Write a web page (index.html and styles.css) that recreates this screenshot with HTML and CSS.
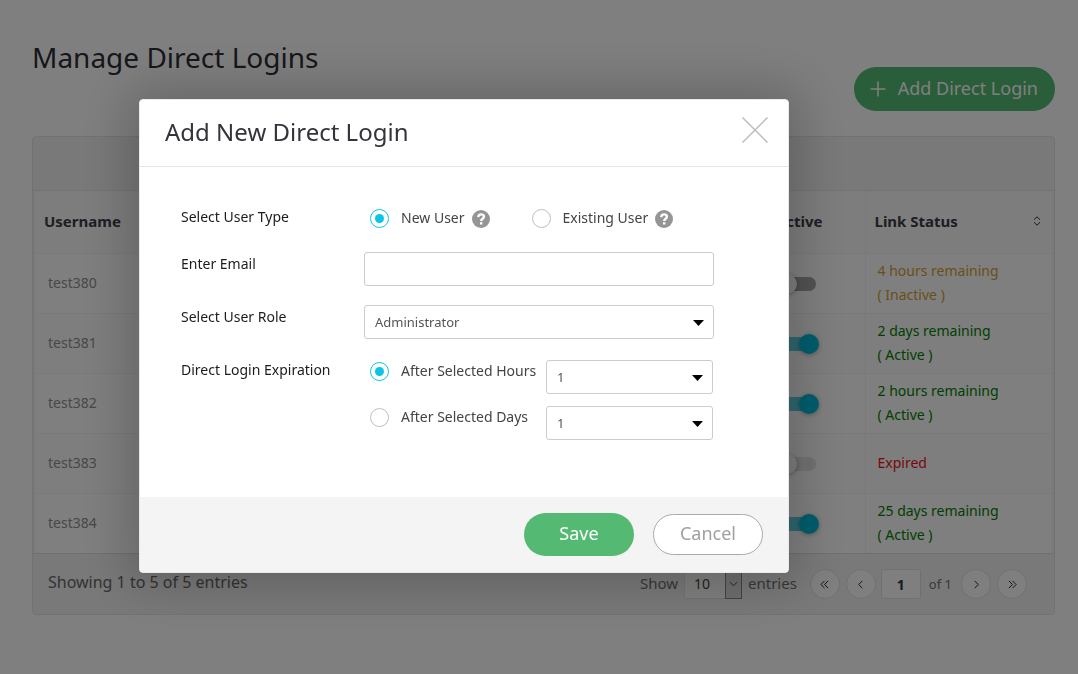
FILE: index.html
```html
<!DOCTYPE html>
<html lang="en">
<head>
<meta charset="utf-8">
<meta name="viewport" content="width=device-width, initial-scale=1">
<title>Manage Direct Logins</title>
<link rel="stylesheet" href="styles.css">
</head>
<body>
<main class="page">
  <header class="page-header">
    <h1 class="page-title">Manage Direct Logins</h1>
    <button class="add-button" type="button">
      <svg class="plus" viewBox="0 0 16 16" aria-hidden="true"><path d="M8 0.5v15M0.5 8h15"/></svg>
      Add Direct Login
    </button>
  </header>
  <section class="panel">
    <div class="panel-toolbar"></div>
    <table class="logins">
      <colgroup><col><col class="col-active"><col class="col-status"></colgroup>
      <thead>
        <tr>
          <th scope="col">Username</th>
          <th scope="col" class="head-active">Active</th>
          <th scope="col"><span class="sortable">Link Status
            <svg class="sort" viewBox="0 0 8 10" aria-hidden="true"><path d="M1 3.7L4 0.8l3 2.9M1 6.3L4 9.2l3-2.9"/></svg></span></th>
        </tr>
      </thead>
      <tbody>
        <tr><td>test380</td><td class="cell-active"><input class="switch" type="checkbox" aria-label="test380 active"></td><td class="inactive">4 hours remaining<br>( Inactive )</td></tr>
        <tr><td>test381</td><td class="cell-active"><input class="switch" type="checkbox" aria-label="test381 active" checked></td><td class="active">2 days remaining<br>( Active )</td></tr>
        <tr><td>test382</td><td class="cell-active"><input class="switch" type="checkbox" aria-label="test382 active" checked></td><td class="active">2 hours remaining<br>( Active )</td></tr>
        <tr><td>test383</td><td class="cell-active"><input class="switch" type="checkbox" aria-label="test383 active" disabled></td><td class="expired">Expired</td></tr>
        <tr><td>test384</td><td class="cell-active"><input class="switch" type="checkbox" aria-label="test384 active" checked></td><td class="active">25 days remaining<br>( Active )</td></tr>
      </tbody>
    </table>
    <footer class="panel-footer">
      <p class="summary">Showing 1 to 5 of 5 entries</p>
      <div class="pager">
        <label class="page-size"><span class="size-text">Show</span>
          <span class="size-box"><select class="size-select"><option>10</option></select><svg class="size-arrow" viewBox="0 0 17 30" aria-hidden="true"><path d="M4.500 13l4 4 4-4"/></svg></span>
          <span class="size-text">entries</span></label>
        <button class="round" type="button" aria-label="First page"><svg viewBox="0 0 10 10"><path d="M5 1L1 5l4 4M9 1L5 5l4 4"/></svg></button>
        <button class="round" type="button" aria-label="Previous page"><svg viewBox="0 0 10 10"><path d="M7 1L3 5l4 4"/></svg></button>
        <input class="page-number" type="text" value="1" aria-label="Page">
        <span class="page-total">of 1</span>
        <button class="round" type="button" aria-label="Next page"><svg viewBox="0 0 10 10"><path d="M3 1l4 4-4 4"/></svg></button>
        <button class="round" type="button" aria-label="Last page"><svg viewBox="0 0 10 10"><path d="M1 1l4 4-4 4M5 1l4 4-4 4"/></svg></button>
      </div>
    </footer>
  </section>
</main>

<div class="overlay">
  <form class="dialog" role="dialog" aria-labelledby="dialog-title">
    <header class="dialog-header">
      <h2 class="dialog-title" id="dialog-title">Add New Direct Login</h2>
      <button class="close" type="button" aria-label="Close"><svg viewBox="0 0 26 26"><path d="M0.5 0.5l25 25M25.5 0.5l-25 25"/></svg></button>
    </header>
    <div class="dialog-body">
      <span class="field-label" id="type-label">Select User Type</span>
      <div class="choices" role="radiogroup" aria-labelledby="type-label">
        <label class="choice"><input class="radio" type="radio" name="type" checked>New User
          <svg class="help" viewBox="0 0 18 18" aria-hidden="true"><circle cx="9" cy="9" r="9"/><path d="M6.200 7.100C6.300 5.200 7.400 4.400 9.100 4.400c1.700 0 2.800.9 2.800 2.300 0 2-2.700 2-2.700 4.200"/><path d="M9.200 12.200v2.300"/></svg></label>
        <label class="choice"><input class="radio" type="radio" name="type">Existing User
          <svg class="help" viewBox="0 0 18 18" aria-hidden="true"><circle cx="9" cy="9" r="9"/><path d="M6.200 7.100C6.300 5.200 7.400 4.400 9.100 4.400c1.700 0 2.800.9 2.800 2.300 0 2-2.700 2-2.700 4.200"/><path d="M9.200 12.200v2.300"/></svg></label>
      </div>
      <label class="field-label" for="email">Enter Email</label>
      <input class="control" id="email" type="email">
      <label class="field-label" for="role">Select User Role</label>
      <span class="select-box"><select class="control" id="role"><option>Administrator</option></select><svg class="caret" viewBox="0 0 11 6" aria-hidden="true"><path d="M0 0h11L5.500 6z"/></svg></span>
      <span class="field-label" id="exp-label">Direct Login Expiration</span>
      <div class="expiry" role="radiogroup" aria-labelledby="exp-label">
        <label class="choice"><input class="radio" type="radio" name="expiry" checked>After Selected Hours</label>
        <span class="select-box"><select class="control" aria-label="Hours"><option>1</option></select><svg class="caret" viewBox="0 0 11 6" aria-hidden="true"><path d="M0 0h11L5.500 6z"/></svg></span>
        <label class="choice"><input class="radio" type="radio" name="expiry">After Selected Days</label>
        <span class="select-box"><select class="control" aria-label="Days"><option>1</option></select><svg class="caret" viewBox="0 0 11 6" aria-hidden="true"><path d="M0 0h11L5.500 6z"/></svg></span>
      </div>
    </div>
    <footer class="dialog-footer">
      <button class="save" type="submit">Save</button>
      <button class="cancel" type="button">Cancel</button>
    </footer>
  </form>
</div>
</body>
</html>
```

FILE: styles.css
```css
* { box-sizing: border-box; }

body {
  margin: 0;
  background: #fff;
  font-family: "Noto Sans", sans-serif;
  font-size: 14px;
  line-height: 24px;
  color: #333;
}

button, input, select { font: inherit; margin: 0; }
svg { display: block; fill: none; stroke: currentColor; }

.page { padding: 0 23px 59px 32px; }

.page-header {
  display: flex;
  justify-content: space-between;
  align-items: flex-start;
  min-height: 136px;
}
.page-title { margin: 37px 0 0; font-size: 28px; line-height: 40px; font-weight: 400; color: #2e2f36; }

.add-button {
  display: flex;
  align-items: center;
  gap: 12px;
  height: 44px;
  margin-top: 67px;
  padding: 0 17px 2px 16px;
  border: 0;
  border-radius: 22px;
  background: #54ba73;
  color: #fff;
  font-size: 18px;
}
.plus { width: 16px; height: 16px; margin-top: 2px; stroke-width: 1.5; }

.panel { border: 1px solid #e4e4e4; border-radius: 4px; background: #f2f2f2; }
.panel-toolbar { height: 54px; border-bottom: 1px solid #e4e4e4; }

.logins {
  width: calc(100% - 4px);
  margin: 0 2px;
  border-collapse: collapse;
  table-layout: fixed;
  background: #fff;
}
.col-active { width: 200px; }
.col-status { width: 187px; }
.logins th {
  height: 62px;
  padding: 0 10px 2px 9px;
  background: #fafafa;
  text-align: left;
  font-size: 15px;
  font-weight: 700;
  color: #3c3c4a;
}
.logins .head-active { padding-right: 42px; text-align: right; }
.sortable { display: flex; align-items: center; justify-content: space-between; }
.sort { width: 8px; height: 10px; margin-right: 1px; color: #333; }
.logins td {
  height: 60px;
  padding: 0 12px 0 13px;
  border-top: 1px solid #f3f3f3;
  color: #909090;
}
.logins tr > :last-child { border-left: 1px solid #f3f3f3; }
.logins tr:nth-child(even) td { background: #fdfdfd; }
.logins .cell-active { padding: 1px 49px 0 0; }
.logins tr > td:last-child { padding-left: 12px; }
.logins .inactive { color: #cfa132; }
.logins .active { color: #008000; }
.logins .expired { color: #f00f18; }

.switch {
  appearance: none;
  display: flex;
  align-items: center;
  width: 36px;
  height: 14px;
  margin-left: auto;
  border-radius: 7px;
  background: #a6a6a6;
}
.switch::before {
  content: "";
  flex: none;
  width: 20px;
  height: 20px;
  margin-left: -3px;
  border-radius: 50%;
  background: #fafafa;
  box-shadow: 0 1px 5px rgba(0, 0, 0, .3);
}
.switch:checked { background: #60cfe2; }
.switch:checked::before { margin-left: 19px; background: #00bcdc; }
.switch:disabled { background: #e4e4e4; }

.panel-footer {
  display: flex;
  justify-content: space-between;
  align-items: center;
  min-height: 61px;
  padding: 0 27px 0 15px;
  border-top: 1px solid #e0e0e0;
}
.summary { margin: 0; padding-bottom: 4px; font-size: 16px; color: #666; }
.pager { display: flex; align-items: center; gap: 6px; }
.page-size { display: flex; align-items: center; gap: 6px; margin-right: 7px; font-size: 15px; color: #707070; }
.size-text { padding-bottom: 3px; }
.size-box { display: grid; grid-template-columns: 1fr 17px; width: 58px; }
.size-select {
  appearance: none;
  grid-area: 1 / 1 / 2 / 3;
  height: 30px;
  padding: 0 9px;
  border: 1px solid #e4e4e4;
  border-radius: 3px;
  background: #fff;
  font-size: 14px;
  color: #444;
}
.size-arrow {
  grid-area: 1 / 2;
  width: 17px;
  height: 30px;
  border: 1px solid #888;
  background: #ddd;
  color: #333;
  pointer-events: none;
}
.round {
  display: grid;
  place-items: center;
  width: 30px;
  height: 30px;
  padding: 0;
  border: 1px solid #e0e0e0;
  border-radius: 50%;
  background: #fff;
  color: #111;
}
.round svg { width: 9px; height: 9px; }
.page-number {
  width: 40px;
  height: 30px;
  margin-left: -1px;
  padding: 0;
  border: 1px solid #e0e0e0;
  border-radius: 3px;
  background: #fff;
  text-align: center;
  font-weight: 700;
  color: #34343e;
}
.page-total { margin: 0 3px 0 2px; font-size: 13px; color: #707070; }

.overlay {
  position: fixed;
  inset: 0;
  display: flex;
  justify-content: center;
  align-items: flex-start;
  overflow: auto;
  padding: 99px 150px 40px 0;
  background: rgba(0, 0, 0, .5);
}
.dialog {
  width: 100%;
  max-width: 650px;
  overflow: visible;
  border: 1px solid #e8eaec;
  border-radius: 4px;
  background: #fff;
  box-shadow: 0 0 50px 12px rgba(0, 0, 0, .2);
}
.dialog-header {
  display: flex;
  justify-content: space-between;
  align-items: center;
  height: 67px;
  padding: 0 20px 2px 25px;
  border-bottom: 1px solid #e5e5e5;
}
.dialog-title { margin: 0; font-size: 24px; line-height: 32px; font-weight: 400; color: #33343c; }
.close { padding: 0; border: 0; background: none; color: #bcbcbc; }
.close svg { width: 26px; height: 26px; margin-bottom: 4px; stroke-width: 1.5; }

.dialog-body {
  display: grid;
  grid-template-columns: 183px 350px;
  grid-template-rows: 28px auto;
  row-gap: 19px;
  padding: 38px 41px 57px;
}
.field-label { color: #1c1c1c; }
.choices { display: flex; gap: 42px; padding-left: 6px; }
.choice { display: flex; align-items: center; height: 26px; color: #444; white-space: nowrap; }
.radio {
  appearance: none;
  display: grid;
  place-items: center;
  width: 19px;
  height: 19px;
  margin-right: 12px;
  border: 1px solid #bfbfbf;
  border-radius: 50%;
}
.radio:checked { border-color: #0cc5e6; }
.radio:checked::before { content: ""; width: 9px; height: 9px; border-radius: 50%; background: #0cc5e6; }
.help { width: 18px; height: 18px; margin: 1px 0 0 7px; stroke: #fff; stroke-width: 2.4; }
.help circle { fill: #959595; stroke: none; }
.control {
  appearance: none;
  width: 100%;
  height: 34px;
  padding: 0 10px;
  border: 1px solid #ccc;
  border-radius: 3px;
  background: #fff;
  font-size: 13px;
  color: #555;
}
.select-box { display: grid; align-items: center; }
.select-box > * { grid-area: 1 / 1; }
.caret { justify-self: end; width: 11px; height: 6px; margin: 2px 10px 0 0; fill: #000; stroke: none; pointer-events: none; }
.expiry {
  display: grid;
  grid-template-columns: 176px 167px;
  justify-content: space-between;
  row-gap: 10px;
  padding: 0 1px 0 6px;
}
.expiry .select-box { margin-top: 2px; }

.dialog-footer {
  display: flex;
  justify-content: flex-end;
  align-items: center;
  gap: 19px;
  height: 75px;
  padding: 0 25px;
  border-radius: 0 0 4px 4px;
  background: #f4f4f4;
}
.save, .cancel { width: 110px; padding: 0 0 3px; font-size: 18px; }
.save { height: 43px; border: 0; border-radius: 22px; background: #54ba73; color: #fff; }
.cancel { height: 41px; border: 1px solid #aaa; border-radius: 21px; background: #fff; color: #a0a0a0; }
```
